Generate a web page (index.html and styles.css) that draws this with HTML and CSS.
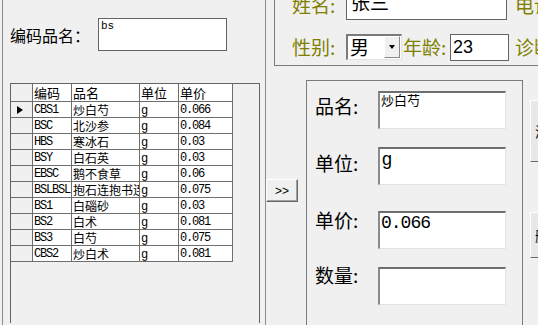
FILE: index.html
```html
<!DOCTYPE html>
<html lang="zh-CN">
<head>
    <meta charset="UTF-8">
    <meta name="viewport" content="width=device-width, initial-scale=1.0">
    <title>处方录入</title>
    <link rel="stylesheet" href="styles.css">
</head>
<body>
    <div class="window">
        <div class="left-panel">
            <div class="search-row">
                <span class="search-label">编码品名：</span>
                <div class="search-box">bs</div>
            </div>

            <div class="grid">
                <div class="grid-row grid-head">
                    <div class="cell row-head"></div>
                    <div class="cell">编码</div>
                    <div class="cell">品名</div>
                    <div class="cell">单位</div>
                    <div class="cell">单价</div>
                </div>
                <div class="grid-row current">
                    <div class="cell row-head"></div>
                    <div class="cell mono">CBS1</div>
                    <div class="cell">炒白芍</div>
                    <div class="cell mono unit">g</div>
                    <div class="cell mono">0.066</div>
                </div>
                <div class="grid-row">
                    <div class="cell row-head"></div>
                    <div class="cell mono">BSC</div>
                    <div class="cell">北沙参</div>
                    <div class="cell mono unit">g</div>
                    <div class="cell mono">0.084</div>
                </div>
                <div class="grid-row">
                    <div class="cell row-head"></div>
                    <div class="cell mono">HBS</div>
                    <div class="cell">寒冰石</div>
                    <div class="cell mono unit">g</div>
                    <div class="cell mono">0.03</div>
                </div>
                <div class="grid-row">
                    <div class="cell row-head"></div>
                    <div class="cell mono">BSY</div>
                    <div class="cell">白石英</div>
                    <div class="cell mono unit">g</div>
                    <div class="cell mono">0.03</div>
                </div>
                <div class="grid-row">
                    <div class="cell row-head"></div>
                    <div class="cell mono">EBSC</div>
                    <div class="cell">鹅不食草</div>
                    <div class="cell mono unit">g</div>
                    <div class="cell mono">0.06</div>
                </div>
                <div class="grid-row">
                    <div class="cell row-head"></div>
                    <div class="cell mono">BSLBSL</div>
                    <div class="cell">抱石连抱书连</div>
                    <div class="cell mono unit">g</div>
                    <div class="cell mono">0.075</div>
                </div>
                <div class="grid-row">
                    <div class="cell row-head"></div>
                    <div class="cell mono">BS1</div>
                    <div class="cell">白碯砂</div>
                    <div class="cell mono unit">g</div>
                    <div class="cell mono">0.03</div>
                </div>
                <div class="grid-row">
                    <div class="cell row-head"></div>
                    <div class="cell mono">BS2</div>
                    <div class="cell">白术</div>
                    <div class="cell mono unit">g</div>
                    <div class="cell mono">0.081</div>
                </div>
                <div class="grid-row">
                    <div class="cell row-head"></div>
                    <div class="cell mono">BS3</div>
                    <div class="cell">白芍</div>
                    <div class="cell mono unit">g</div>
                    <div class="cell mono">0.075</div>
                </div>
                <div class="grid-row">
                    <div class="cell row-head"></div>
                    <div class="cell mono">CBS2</div>
                    <div class="cell">炒白术</div>
                    <div class="cell mono unit">g</div>
                    <div class="cell mono">0.081</div>
                </div>
            </div>
        </div>

        <div class="right-area">
            <div class="patient-box">
                <div class="patient-row">
                    <span class="field-label">姓名:</span>
                    <div class="name-box">张三</div>
                    <span class="extra-label">电话</span>
                </div>
                <div class="patient-row short">
                    <span class="field-label">性别:</span>
                    <div class="combo">
                        <span class="combo-value">男</span>
                        <span class="combo-btn"></span>
                    </div>
                    <span class="age-label">年龄:</span>
                    <div class="age-box">23</div>
                    <span class="extra-label near">诊断</span>
                </div>
            </div>

            <div class="work-row">
                <div class="move-col">
                    <button class="move-btn">&gt;&gt;</button>
                </div>

                <div class="item-panel">
                    <div class="item-row">
                        <span class="item-label name-label">品名:</span>
                        <div class="item-box small-text">炒白芍</div>
                    </div>
                    <div class="item-row unit-row">
                        <span class="item-label unit-label">单位:</span>
                        <div class="item-box sans-text">g</div>
                    </div>
                    <div class="item-row price-row">
                        <span class="item-label price-label">单价:</span>
                        <div class="item-box mono-text">0.066</div>
                    </div>
                    <div class="item-row qty-row">
                        <span class="item-label qty-label">数量:</span>
                        <div class="item-box"></div>
                    </div>
                </div>

                <div class="side-btns">
                    <button class="side-btn add-btn">添加</button>
                    <button class="side-btn del-btn">删除</button>
                </div>
            </div>
        </div>
    </div>
</body>
</html>
```

FILE: styles.css
```css
* {
    margin: 0;
    padding: 0;
    box-sizing: border-box;
}

body {
    font-family: "Noto Sans CJK SC", sans-serif;
    background: #f0f0f0;
    width: 538px;
    height: 325px;
    overflow: hidden;
    color: #000;
}

.window {
    display: flex;
    height: 325px;
}

/* left: search + grid */
.left-panel {
    flex-shrink: 0;
    width: 264px;
    height: 325px;
    margin-left: 2px;
    border-left: 1px solid #8c8c8c;
    border-right: 1px solid #8c8c8c;
    padding: 18px 0 0 7px;
}

.search-row {
    display: flex;
    align-items: center;
}

.search-label {
    width: 88px;
    font-size: 16px;
    line-height: 20px;
}

.search-box {
    width: 129px;
    height: 33px;
    background: white;
    border: 1px solid #646464;
    font-family: "Liberation Mono", monospace;
    font-size: 11px;
    line-height: 12px;
    padding: 1px 2px;
}

.grid {
    margin-top: 32px;
    width: 250px;
    height: 240px;
    border: 1px solid #646464;
    border-bottom: none;
    background: #f0f0f0;
}

.grid-row {
    display: grid;
    grid-template-columns: 22px 39px 68px 39px 54px;
    height: 16px;
}

.grid-head {
    height: 18px;
}

.cell {
    background: white;
    border-right: 1px solid #6e6e6e;
    border-bottom: 1px solid #6e6e6e;
    font-size: 12px;
    line-height: 15px;
    padding-left: 1px;
    overflow: hidden;
    white-space: nowrap;
}

.grid-head .cell {
    font-size: 13px;
    line-height: 17px;
}

.cell.row-head {
    background: #f0f0f0;
    display: flex;
    align-items: center;
    padding-left: 6px;
}

.current .row-head::before {
    content: "";
    border-left: 6px solid #000;
    border-top: 4.5px solid transparent;
    border-bottom: 4.5px solid transparent;
}

.mono {
    font-family: "Liberation Mono", monospace;
    font-size: 12px;
    letter-spacing: -1.2px;
    line-height: 14px;
    padding-top: 1px;
}

.unit {
    line-height: 12px;
    padding-top: 3px;
}

/* right: patient info */
.right-area {
    flex-shrink: 0;
    width: 272px;
    overflow: hidden;
}

.patient-box {
    width: 290px;
    margin: -30px 0 0 8px;
    border: 1px solid #7a7a7a;
    padding: 19px 0 5px 17px;
    color: #808000;
    font-size: 19px;
}

.patient-row {
    display: flex;
    align-items: center;
    height: 30px;
}

.patient-row.short {
    height: 26px;
    margin-top: 14px;
}

.field-label {
    width: 54px;
    line-height: 20px;
}

.name-box {
    width: 161px;
    height: 30px;
    background: white;
    border: 1px solid #646464;
    color: #000;
    line-height: 22px;
    padding-left: 4px;
}

.extra-label {
    margin-left: 8px;
    line-height: 20px;
    white-space: nowrap;
}

.extra-label.near {
    margin-left: 6px;
}

.combo {
    display: flex;
    width: 56px;
    height: 26px;
    background: white;
    border-top: 2px solid #7a7a7a;
    border-left: 2px solid #7a7a7a;
    border-right: 1px solid #e3e3e3;
    border-bottom: 1px solid #e3e3e3;
}

.combo-value {
    flex: 1;
    color: #000;
    line-height: 22px;
    padding-left: 2px;
}

.combo-btn {
    width: 16px;
    margin: 0 1px 1px 0;
    background: #f0f0f0;
    border: 1px solid;
    border-color: #fff #8a8a8a #8a8a8a #fff;
    display: flex;
    align-items: center;
    justify-content: center;
}

.combo-btn::before {
    content: "";
    border-top: 4px solid #000;
    border-left: 3.5px solid transparent;
    border-right: 3.5px solid transparent;
}

.age-label {
    width: 48px;
    padding-left: 1px;
    line-height: 20px;
}

.age-box {
    width: 59px;
    height: 27px;
    background: white;
    border: 1px solid #646464;
    color: #000;
    font-family: "Liberation Sans", sans-serif;
    font-size: 18px;
    line-height: 25px;
    padding-left: 2px;
}

/* lower work area */
.work-row {
    display: flex;
    margin-top: 14px;
}

.move-col {
    flex-shrink: 0;
    width: 40px;
}

.move-btn {
    margin-top: 99px;
    width: 32px;
    height: 23px;
    background: #f0f0f0;
    border: 1px solid;
    border-color: #fff #696969 #696969 #fff;
    box-shadow: inset -1px -1px #a0a0a0;
    font-family: "Liberation Sans", sans-serif;
    font-size: 12px;
    color: #000;
}

.item-panel {
    flex-shrink: 0;
    width: 217px;
    height: 245px;
    border: 1px solid #7a7a7a;
    border-bottom: none;
    padding: 10px 0 0 8px;
}

.item-row {
    display: flex;
    align-items: flex-start;
}

.unit-row,
.qty-row {
    margin-top: 18px;
}

.price-row {
    margin-top: 26px;
}

.item-label {
    width: 63px;
    font-size: 19px;
    line-height: 20px;
}

.name-label { margin-top: 5px; }
.unit-label { margin-top: 6px; }
.price-label { margin-top: -1px; }
.qty-label { margin-top: -2px; }

.item-box {
    width: 128px;
    height: 38px;
    background: white;
    border-top: 2px solid #6e6e6e;
    border-left: 2px solid #8a8a8a;
    border-right: 1px solid #e3e3e3;
    border-bottom: 1px solid #e3e3e3;
}

.small-text {
    font-size: 13px;
    line-height: 14px;
    padding-left: 1px;
}

.sans-text {
    font-family: "Liberation Sans", sans-serif;
    font-size: 18px;
    line-height: 20px;
    padding-left: 2px;
}

.mono-text {
    font-family: "Liberation Mono", monospace;
    font-size: 18px;
    line-height: 20px;
    letter-spacing: -1px;
    padding-left: 1px;
}

.side-btns {
    flex-shrink: 0;
    width: 8px;
    margin-left: 7px;
    overflow: hidden;
}

.side-btn {
    display: block;
    width: 40px;
    background: #e8e8e8;
    border: 1px solid;
    border-color: #fff #696969 #696969 #fff;
    font-size: 14px;
    text-align: left;
    padding-left: 4px;
    color: #000;
}

.add-btn {
    height: 62px;
    margin-top: 20px;
}

.del-btn {
    height: 46px;
    margin-top: 50px;
}
```
